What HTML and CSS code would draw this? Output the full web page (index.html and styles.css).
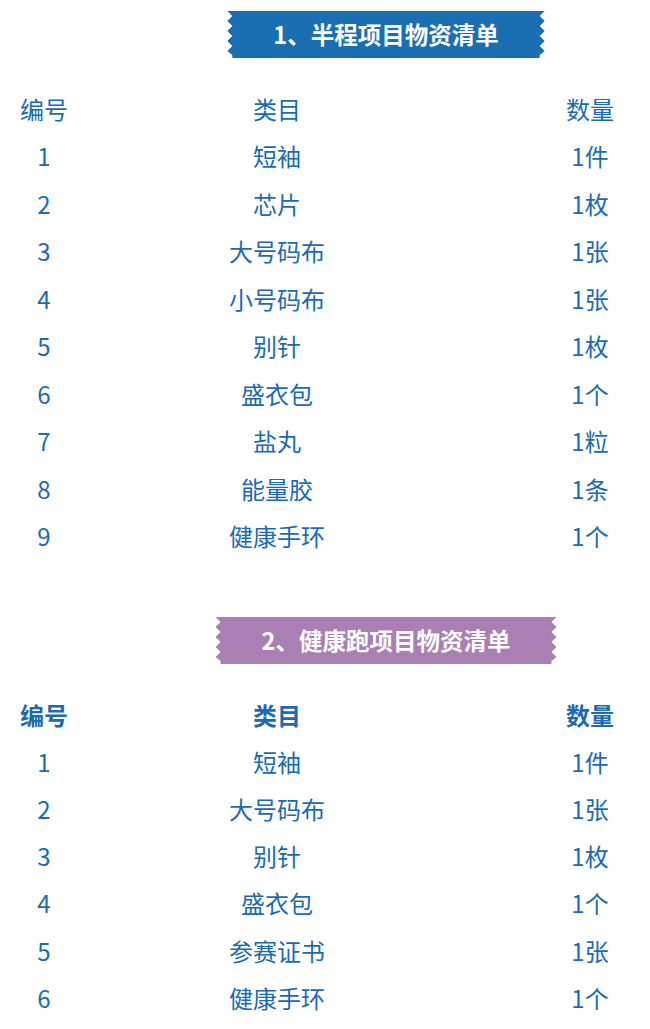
FILE: index.html
```html
<!DOCTYPE html>
<html lang="zh">
<head>
<meta charset="utf-8">
<title>物资清单</title>
<link rel="stylesheet" href="styles.css">
</head>
<body>
<section class="section s1">
  <div class="banner-wrap"><h2 class="banner blue">1、半程项目物资清单</h2></div>
  <div class="table">
    <div class="row head"><span>编号</span><span>类目</span><span>数量</span></div>
    <div class="row"><span>1</span><span>短袖</span><span>1件</span></div>
    <div class="row"><span>2</span><span>芯片</span><span>1枚</span></div>
    <div class="row"><span>3</span><span>大号码布</span><span>1张</span></div>
    <div class="row"><span>4</span><span>小号码布</span><span>1张</span></div>
    <div class="row"><span>5</span><span>别针</span><span>1枚</span></div>
    <div class="row"><span>6</span><span>盛衣包</span><span>1个</span></div>
    <div class="row"><span>7</span><span>盐丸</span><span>1粒</span></div>
    <div class="row"><span>8</span><span>能量胶</span><span>1条</span></div>
    <div class="row"><span>9</span><span>健康手环</span><span>1个</span></div>
  </div>
</section>
<section class="section s2">
  <div class="banner-wrap"><h2 class="banner purple">2、健康跑项目物资清单</h2></div>
  <div class="table">
    <div class="row head bold"><span>编号</span><span>类目</span><span>数量</span></div>
    <div class="row"><span>1</span><span>短袖</span><span>1件</span></div>
    <div class="row"><span>2</span><span>大号码布</span><span>1张</span></div>
    <div class="row"><span>3</span><span>别针</span><span>1枚</span></div>
    <div class="row"><span>4</span><span>盛衣包</span><span>1个</span></div>
    <div class="row"><span>5</span><span>参赛证书</span><span>1张</span></div>
    <div class="row"><span>6</span><span>健康手环</span><span>1个</span></div>
  </div>
</section>
</body>
</html>
```
FILE: styles.css
```css
html, body {
  margin: 0;
  padding: 0;
  background: #ffffff;
}
body {
  width: 650px;
  font-family: "Noto Sans CJK SC", "Noto Sans", sans-serif;
  color: #1a6bb4;
}
.s1 {
  padding-top: 11px;
}
.s2 {
  padding-top: 57px;
}
.banner-wrap {
  display: flex;
  justify-content: center;
  padding-left: 122px;
}
.banner {
  margin: 0;
  height: 47px;
  line-height: 47px;
  padding: 0 46px;
  font-size: 23.5px;
  font-weight: 700;
  letter-spacing: 0;
  color: #ffffff;
  white-space: nowrap;
  clip-path: polygon(
    0 0, 100% 0,
    calc(100% - 5px) 5px, 100% 10px,
    calc(100% - 5px) 15px, 100% 20px,
    calc(100% - 5px) 25px, 100% 30px,
    calc(100% - 5px) 35px, 100% 40px,
    calc(100% - 5px) 44px, calc(100% - 5px) 100%,
    5px 100%, 5px 44px,
    0 40px, 5px 35px,
    0 30px, 5px 25px,
    0 20px, 5px 15px,
    0 10px, 5px 5px
  );
}
.blue {
  background: #1a6fb3;
}
.purple {
  background: #aa80b4;
}
.table {
  padding-top: 27px;
}
.row {
  display: grid;
  grid-template-columns: 88px 378px 1fr;
  height: 47.5px;
  align-items: center;
  font-size: 24px;
  line-height: 1;
}
.s2 .row {
  height: 47.2px;
}
.row span {
  text-align: center;
}
.row span:nth-child(3) {
  padding-left: 64px;
}
.bold {
  font-weight: 700;
}
```
